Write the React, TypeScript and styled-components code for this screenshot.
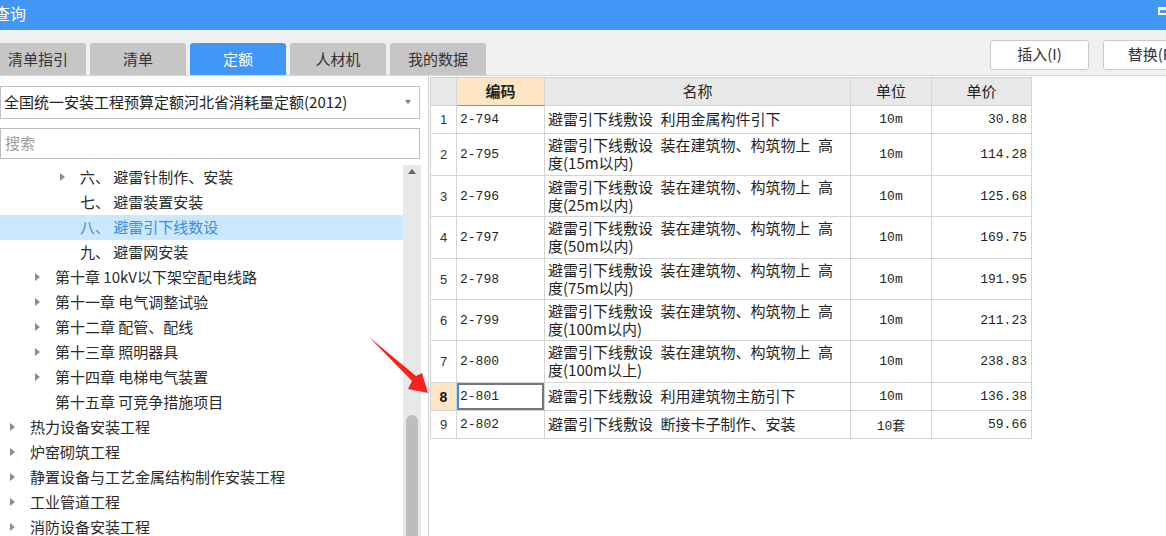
import React from 'react';
import styled, { createGlobalStyle, css } from 'styled-components';

const GlobalStyle = createGlobalStyle`
  html, body { margin: 0; padding: 0; background: #fff; }
  body { font-family: "Noto Sans CJK SC", "Noto Sans", sans-serif; overflow: hidden; }
  * { box-sizing: border-box; }
`;

const Window = styled.div`
  position: relative;
  width: 1166px;
  height: 536px;
  overflow: hidden;
  display: flex;
  flex-direction: column;
  background: #f0f0f0;
`;

const TitleBar = styled.div`
  height: 30px;
  flex: none;
  background: #4197f6;
  display: flex;
  justify-content: space-between;
`;

const Title = styled.span`
  color: #fff;
  font-size: 16px;
  line-height: 26px;
  margin-left: -6px;
`;

const MaxIcon = styled.span`
  align-self: flex-start;
  margin-top: 7px;
  margin-right: -4px;
  width: 12px;
  height: 8px;
  border: 2px solid #fff;
  border-top-width: 3px;
`;

const Toolbar = styled.div`
  height: 46px;
  flex: none;
  display: flex;
  justify-content: space-between;
  border-bottom: 1px solid #d6d6d6;
`;

const Tabs = styled.div`
  display: flex;
  gap: 4px;
  align-items: flex-end;
  margin-left: -10px;
  padding-top: 13px;
`;

const Tab = styled.div<{ $active?: boolean }>`
  width: 96px;
  height: 32px;
  padding-bottom: 2px;
  border-radius: 3px 3px 0 0;
  display: flex;
  align-items: center;
  justify-content: center;
  font-size: 15px;
  background: ${(p) => (p.$active ? '#4197f6' : '#c6c6c6')};
  color: ${(p) => (p.$active ? '#fff' : '#333')};
`;

const Actions = styled.div`
  display: flex;
  align-items: flex-start;
  gap: 14px;
  padding-top: 10px;
  margin-right: -36px;
`;

const ActionButton = styled.button`
  width: 99px;
  height: 30px;
  padding: 0 0 3px;
  background: #fff;
  border: 1px solid #c9c9c9;
  border-radius: 3px;
  font: 15px "Noto Sans CJK SC", sans-serif;
  color: #333;
`;

const Body = styled.div`
  flex: 1;
  min-height: 0;
  display: flex;
  background: #fff;
`;

const LeftPanel = styled.div`
  width: 429px;
  flex: none;
  display: flex;
  flex-direction: column;
  padding-top: 10px;
  border-right: 1px solid #cfcfcf;
`;

const SelectBox = styled.div`
  width: 420px;
  height: 33px;
  flex: none;
  display: flex;
  align-items: center;
  justify-content: space-between;
  padding: 0 8px 2px 3px;
  border: 1px solid #c3c3c3;
  font-size: 15px;
  color: #222;
  white-space: nowrap;
`;

const Caret = styled.span`
  width: 0;
  height: 0;
  border-left: 3.5px solid transparent;
  border-right: 3.5px solid transparent;
  border-top: 4px solid #7a7a7a;
`;

const SearchInput = styled.input`
  width: 420px;
  height: 31px;
  flex: none;
  margin-top: 9px;
  padding: 0 4px 2px;
  border: 1px solid #bdbdbd;
  font: 15px "Noto Sans CJK SC", sans-serif;
  color: #222;
  outline: none;
  &::placeholder { color: #9a9a9a; }
`;

const TreeArea = styled.div`
  flex: 1;
  min-height: 0;
  margin-top: 6px;
  display: flex;
  overflow: hidden;
`;

const TreeList = styled.div`
  width: 403px;
  flex: none;
`;

const TreeRow = styled.div<{ $level: number; $selected?: boolean }>`
  height: 25px;
  display: flex;
  align-items: center;
  padding-left: ${(p) => 10 + p.$level * 25}px;
  padding-bottom: 3px;
  font-size: 15px;
  white-space: nowrap;
  color: ${(p) => (p.$selected ? '#3b8de0' : '#2a2a2a')};
  background: ${(p) => (p.$selected ? '#cce8ff' : 'transparent')};
`;

const Expander = styled.span`
  width: 20px;
  flex: none;
  display: flex;
  align-items: center;
  padding-top: 2px;
`;

const ExpandArrow = styled.span`
  width: 0;
  height: 0;
  border-top: 4.5px solid transparent;
  border-bottom: 4.5px solid transparent;
  border-left: 5px solid #8c8c8c;
`;

const ScrollBar = styled.div`
  width: 18px;
  flex: none;
  background: #e8e8e8;
  display: flex;
  flex-direction: column;
  align-items: center;
`;

const UpArrow = styled.span`
  margin-top: 4px;
  width: 0;
  height: 0;
  border-left: 4.5px solid transparent;
  border-right: 4.5px solid transparent;
  border-bottom: 5px solid #666;
`;

const Thumb = styled.span`
  margin-top: auto;
  width: 12px;
  height: 121px;
  border-radius: 6px 6px 0 0;
  background: #bdbdbd;
`;

const RightPanel = styled.div`
  flex: 1;
  padding: 1px 0 0 1px;
`;

const Table = styled.div`
  width: 602px;
  border-left: 1px solid #d4d4d4;
  border-top: 1px solid #d4d4d4;
`;

const Row = styled.div<{ $h: number }>`
  display: grid;
  grid-template-columns: 26px 88px 306px 81px 100px;
  height: ${(p) => p.$h}px;
`;

const cellBase = css`
  border-right: 1px solid #d4d4d4;
  border-bottom: 1px solid #d4d4d4;
  display: flex;
  align-items: center;
  min-width: 0;
  white-space: nowrap;
`;

const HeadCell = styled.div<{ $key?: boolean }>`
  ${cellBase};
  justify-content: center;
  padding-bottom: 2px;
  font-size: 15px;
  color: #222;
  background: ${(p) => (p.$key ? '#fde5c6' : '#e8e8e8')};
  font-weight: ${(p) => (p.$key ? 700 : 400)};
  ${(p) => p.$key && css`border-bottom-color: #5aa0e6;`}
`;

const NumCell = styled.div<{ $current?: boolean }>`
  ${cellBase};
  justify-content: center;
  font-family: "Liberation Sans", sans-serif;
  font-size: 13px;
  color: #333;
  background: ${(p) => (p.$current ? '#fde5c6' : '#fff')};
  font-weight: ${(p) => (p.$current ? 700 : 400)};
  ${(p) => p.$current && css`font-size: 14px; color: #111;`}
`;

const monoFont = css`
  font-family: "Liberation Mono", "Noto Sans CJK SC", monospace;
  font-size: 13px;
  color: #1f1f1f;
`;

const CodeCell = styled.div<{ $current?: boolean }>`
  ${cellBase};
  ${monoFont};
  padding-left: 3px;
  ${(p) =>
    p.$current &&
    css`
      box-shadow: inset 2px 0 0 #3c8ce7, inset 0 0 0 2px #777;
    `}
`;

const NameCell = styled.div`
  ${cellBase};
  flex-direction: column;
  justify-content: center;
  align-items: flex-start;
  padding: 0 0 1px 3px;
  font-size: 15px;
  line-height: 18px;
  color: #1f1f1f;
`;

const UnitCell = styled.div`
  ${cellBase};
  ${monoFont};
  justify-content: center;
`;

const PriceCell = styled.div`
  ${cellBase};
  ${monoFont};
  justify-content: flex-end;
  padding-right: 4px;
`;

const Overlay = styled.svg`
  position: absolute;
  left: 0;
  top: 0;
  pointer-events: none;
`;

const tabs = ['清单指引', '清单', '定额', '人材机', '我的数据'];

type TreeItem = { level: number; label: string; arrow?: boolean; selected?: boolean };

const tree: TreeItem[] = [
  { level: 2, label: '六、 避雷针制作、安装', arrow: true },
  { level: 2, label: '七、 避雷装置安装' },
  { level: 2, label: '八、 避雷引下线数设', selected: true },
  { level: 2, label: '九、 避雷网安装' },
  { level: 1, label: '第十章 10kV以下架空配电线路', arrow: true },
  { level: 1, label: '第十一章 电气调整试验', arrow: true },
  { level: 1, label: '第十二章 配管、配线', arrow: true },
  { level: 1, label: '第十三章 照明器具', arrow: true },
  { level: 1, label: '第十四章 电梯电气装置', arrow: true },
  { level: 1, label: '第十五章 可竞争措施项目' },
  { level: 0, label: '热力设备安装工程', arrow: true },
  { level: 0, label: '炉窑砌筑工程', arrow: true },
  { level: 0, label: '静置设备与工艺金属结构制作安装工程', arrow: true },
  { level: 0, label: '工业管道工程', arrow: true },
  { level: 0, label: '消防设备安装工程', arrow: true },
];

type DataRow = { n: number; code: string; name: string[]; unit: string; price: string; h: number };

const SP = '\u2002';
const head = `避雷引下线敷设${SP}装在建筑物、构筑物上${SP}高`;

const rows: DataRow[] = [
  { n: 1, code: '2-794', name: [`避雷引下线敷设${SP}利用金属构件引下`], unit: '10m', price: '30.88', h: 28 },
  { n: 2, code: '2-795', name: [head, '度(15m以内)'], unit: '10m', price: '114.28', h: 42 },
  { n: 3, code: '2-796', name: [head, '度(25m以内)'], unit: '10m', price: '125.68', h: 41 },
  { n: 4, code: '2-797', name: [head, '度(50m以内)'], unit: '10m', price: '169.75', h: 42 },
  { n: 5, code: '2-798', name: [head, '度(75m以内)'], unit: '10m', price: '191.95', h: 41 },
  { n: 6, code: '2-799', name: [head, '度(100m以内)'], unit: '10m', price: '211.23', h: 41 },
  { n: 7, code: '2-800', name: [head, '度(100m以上)'], unit: '10m', price: '238.83', h: 42 },
  { n: 8, code: '2-801', name: [`避雷引下线敷设${SP}利用建筑物主筋引下`], unit: '10m', price: '136.38', h: 28 },
  { n: 9, code: '2-802', name: [`避雷引下线敷设${SP}断接卡子制作、安装`], unit: '10套', price: '59.66', h: 28 },
];

const CURRENT = 8;

export default function App() {
  return (
    <>
      <GlobalStyle />
      <Window>
        <TitleBar>
          <Title>查询</Title>
          <MaxIcon />
        </TitleBar>
        <Toolbar>
          <Tabs>
            {tabs.map((t) => (
              <Tab key={t} $active={t === '定额'}>
                {t}
              </Tab>
            ))}
          </Tabs>
          <Actions>
            <ActionButton>插入(I)</ActionButton>
            <ActionButton>替换(R)</ActionButton>
          </Actions>
        </Toolbar>
        <Body>
          <LeftPanel>
            <SelectBox>
              <span>全国统一安装工程预算定额河北省消耗量定额(2012)</span>
              <Caret />
            </SelectBox>
            <SearchInput placeholder="搜索" readOnly />
            <TreeArea>
              <TreeList>
                {tree.map((item) => (
                  <TreeRow key={item.label} $level={item.level} $selected={item.selected}>
                    <Expander>{item.arrow && <ExpandArrow />}</Expander>
                    {item.label}
                  </TreeRow>
                ))}
              </TreeList>
              <ScrollBar>
                <UpArrow />
                <Thumb />
              </ScrollBar>
            </TreeArea>
          </LeftPanel>
          <RightPanel>
            <Table>
              <Row $h={28}>
                <HeadCell />
                <HeadCell $key>编码</HeadCell>
                <HeadCell>名称</HeadCell>
                <HeadCell>单位</HeadCell>
                <HeadCell>单价</HeadCell>
              </Row>
              {rows.map((r) => (
                <Row key={r.n} $h={r.h}>
                  <NumCell $current={r.n === CURRENT}>{r.n}</NumCell>
                  <CodeCell $current={r.n === CURRENT}>{r.code}</CodeCell>
                  <NameCell>
                    {r.name.map((line) => (
                      <span key={line}>{line}</span>
                    ))}
                  </NameCell>
                  <UnitCell>{r.unit}</UnitCell>
                  <PriceCell>{r.price}</PriceCell>
                </Row>
              ))}
            </Table>
          </RightPanel>
        </Body>
        <Overlay width={1166} height={536} viewBox="0 0 1166 536">
          <polygon
            points="369,337 416,376 422,373 428,393 408,389 412,381"
            fill="#f7231b"
          />
        </Overlay>
      </Window>
    </>
  );
}
